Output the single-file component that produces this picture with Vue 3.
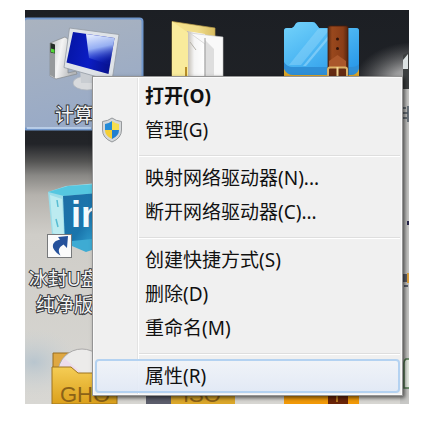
<script setup>
const groups = [
  [
    { label: '打开(O)', bold: true },
    { label: '管理(G)', shield: true },
  ],
  [{ label: '映射网络驱动器(N)...' }, { label: '断开网络驱动器(C)...' }],
  [{ label: '创建快捷方式(S)' }, { label: '删除(D)' }, { label: '重命名(M)' }],
  [{ label: '属性(R)', active: true }],
]
</script>

<template>
  <main class="desktop">
    <svg class="wallpaper" viewBox="25 10 384 394" preserveAspectRatio="xMinYMin slice">
      <defs>
        <linearGradient id="sky" x1="0" y1="0" x2="0" y2="1">
          <stop offset="0" stop-color="#1c1f24" />
          <stop offset="0.34" stop-color="#222428" />
          <stop offset="0.385" stop-color="#555554" />
          <stop offset="0.42" stop-color="#898885" />
          <stop offset="0.47" stop-color="#b5b2ad" />
          <stop offset="0.57" stop-color="#cfcdc8" />
          <stop offset="1" stop-color="#d8d7d3" />
        </linearGradient>
        <radialGradient id="haze" cx="0.5" cy="0.5" r="0.5">
          <stop offset="0" stop-color="#cfcfcf" />
          <stop offset="0.4" stop-color="#b2b2b2" stop-opacity="0.85" />
          <stop offset="1" stop-color="#777" stop-opacity="0" />
        </radialGradient>
        <radialGradient id="mist">
          <stop offset="0" stop-color="#b8c5ce" />
          <stop offset="1" stop-color="#cdd2d3" stop-opacity="0" />
        </radialGradient>
        <linearGradient id="select" x1="0" y1="0" x2="0.3" y2="1">
          <stop offset="0" stop-color="#aab3bf" />
          <stop offset="1" stop-color="#98aac7" />
        </linearGradient>
        <linearGradient id="screen" x1="0" y1="0.4" x2="1" y2="0.6">
          <stop offset="0" stop-color="#0515a5" />
          <stop offset="0.5" stop-color="#0b1dc4" />
          <stop offset="1" stop-color="#071087" />
        </linearGradient>
        <linearGradient id="glare" x1="0" y1="0" x2="0.2" y2="1">
          <stop offset="0" stop-color="#f0f5ff" />
          <stop offset="0.5" stop-color="#a5bffa" stop-opacity="0.9" />
          <stop offset="1" stop-color="#1c39d5" stop-opacity="0.1" />
        </linearGradient>
        <linearGradient id="metal" x1="0" y1="0" x2="1" y2="0.3">
          <stop offset="0" stop-color="#b9bbbd" />
          <stop offset="0.45" stop-color="#f4f4f4" />
          <stop offset="1" stop-color="#b4b6b8" />
        </linearGradient>
        <linearGradient id="manila" x1="0" y1="0" x2="1" y2="0">
          <stop offset="0" stop-color="#f6e38a" />
          <stop offset="0.6" stop-color="#f0dc8a" />
          <stop offset="1" stop-color="#d9bd61" />
        </linearGradient>
        <linearGradient id="paper" x1="0" y1="0" x2="1" y2="0">
          <stop offset="0" stop-color="#bdb7ad" />
          <stop offset="0.4" stop-color="#f5f5f5" />
          <stop offset="1" stop-color="#fff" />
        </linearGradient>
        <linearGradient id="blue" x1="0" y1="0" x2="1" y2="1">
          <stop offset="0" stop-color="#74d3fb" />
          <stop offset="0.5" stop-color="#4db7f3" />
          <stop offset="1" stop-color="#2998e8" />
        </linearGradient>
        <linearGradient id="strap" x1="0" y1="0" x2="1" y2="0">
          <stop offset="0" stop-color="#5e2a10" />
          <stop offset="0.2" stop-color="#99481d" />
          <stop offset="0.75" stop-color="#8a3d17" />
          <stop offset="1" stop-color="#542610" />
        </linearGradient>
        <linearGradient id="gold" x1="0" y1="0" x2="0" y2="1">
          <stop offset="0" stop-color="#f5cd55" />
          <stop offset="1" stop-color="#dba01b" />
        </linearGradient>
        <linearGradient id="cube" x1="0" y1="0" x2="1" y2="1">
          <stop offset="0" stop-color="#1d6fa6" />
          <stop offset="0.6" stop-color="#1a75ac" />
          <stop offset="1" stop-color="#35a8d6" />
        </linearGradient>
      </defs>

      <rect x="25" y="10" width="384" height="394" fill="url(#sky)" />
      <ellipse cx="414" cy="86" rx="62" ry="44" fill="url(#haze)" />
      <rect x="400" y="88" width="9" height="316" fill="#c8c8c6" />
      <ellipse cx="34" cy="362" rx="46" ry="34" fill="url(#mist)" />

      <!-- computer -->
      <rect x="24" y="18.5" width="118.5" height="111" rx="3" fill="url(#select)" stroke="#7197cc" stroke-width="2" />
      <path d="M27 128h64" stroke="#c4d8f1" stroke-width="1.5" />
      <path d="M50 43l15-6 3 2v34l8-2 1 3-21 5-6-3z" fill="url(#metal)" stroke="#85898d" stroke-width="0.7" />
      <path d="M50 43l5 2v33l-5-3z" fill="#96999b" />
      <path d="M50.500 43l4.500 1.500v9l-4.500-1z" fill="#252d26" />
      <path d="M51 48.500l3.500 1v3.500l-3.500-1z" fill="#53d838" />
      <ellipse cx="87" cy="83" rx="14" ry="7" fill="#d8dadd" stroke="#aeb3ba" stroke-width="0.7" />
      <path d="M80 68l14 3v12h-13z" fill="#c9cdd2" />
      <path d="M69.500 28l49.500 6.500-7 46.500-48-13.500z" fill="#dfe3e8" stroke="#939aa3" stroke-width="0.8" />
      <path d="M73 32l41.500 6-6 36-42-11.500z" fill="url(#screen)" />
      <path d="M86 34l28.500 4-4.500 27-21-7z" fill="url(#glare)" />

      <!-- open folder -->
      <path d="M172 21.500l43 6.500v50h-43z" fill="url(#manila)" stroke="#bb9f4b" stroke-width="0.7" />
      <path d="M187 31l18 3v42h-18z" fill="url(#paper)" />
      <path d="M190 33l33 4v39h-18V44z" fill="#f9f9f9" stroke="#c5c5c5" stroke-width="0.6" />
      <path d="M205 40l9 9v27h-9z" fill="#dedede" />
      <path d="M205 38v38" stroke="#9a9a9a" />
      <path d="M190 42l6 8" stroke="#b5b2aa" />
      <path d="M172 21.500l16 11v44h-16z" fill="#f9eb9c" />
      <path d="M186 67v9" stroke="#b88e28" stroke-width="2" />

      <!-- archive folder -->
      <path d="M284 60h75v18h-75z" fill="#dca528" />
      <path d="M284 31q0-3 3-3h5q2-1 3-3 1-3 5-3h12q3 0 4 2l3 4h37q3 0 3 3v38q-2 6-8 6h-58q-6 0-9-6z" fill="#2f8fd6" />
      <path d="M284 31q0-3 3-3h5q2-1 3-3 1-3 5-3h12q3 0 4 2l3 4h37q3 0 3 3v33q-2 3-8 3h-58q-6 0-9-5z" fill="url(#blue)" />
      <path d="M318 29h12l-29 36h-12z" fill="#a5e0fc" opacity="0.35" />
      <path d="M334 29h3l-31 37h-3z" fill="#c2ebff" opacity="0.4" />
      <path d="M328 28q0-2 2-2h16q2 0 2 2v48h-20z" fill="url(#strap)" stroke="#471d0c" stroke-width="0.8" />
      <circle cx="337.500" cy="39" r="1.500" fill="#30130a" />
      <circle cx="337.500" cy="48.500" r="1.500" fill="#30130a" />
      <path d="M329 61l8.500-6 8.500 6v16h-17z" fill="#aa572b" />
      <rect x="328" y="67.500" width="19" height="12" rx="2" fill="#652a12" stroke="#dcb267" stroke-width="2" />
      <path d="M337.500 67v10" stroke="#f0d291" stroke-width="2" />

      <!-- shortcut cube -->
      <path d="M48 192l18-6 32-3v58l-32 2-14-9z" fill="#9cdde9" />
      <path d="M48 192l20-6 30-2v9l-34 3z" fill="#55c7e0" />
      <path d="M63 196l35-3v49l-33 2z" fill="url(#cube)" />
      <path d="M50 195l12 4 2 38-11-4z" fill="#bcebf0" />
      <path d="M57 200l1 7M56 219l2 8" stroke="#58bdd3" stroke-width="1.500" />
      <text class="logo" x="71" y="227">in</text>
      <rect x="47.500" y="234.500" width="24" height="23" fill="#fbfbfb" stroke="#77797b" />
      <path d="M58 237l10-1-1 12-3.500-3.500c-5 3-6 6-3 11-11-7-9-14-0.500-16z" fill="#25519b" />
      <path d="M72 241l20-2v11l-6 2-14-6z" fill="#3eabd3" />

      <!-- disk image archives -->
      <path d="M53 353h20v40h-20z" fill="#dfa842" stroke="#976c21" />
      <circle cx="82" cy="373" r="24" fill="#ecebea" stroke="#aaa9a9" />
      <path d="M82 373L59 367l5-9z" fill="#eddceb" />
      <path d="M52 367h19l7 6h39v31H52z" fill="url(#gold)" stroke="#9d7420" />
      <text class="gho" x="60" y="402">GHO</text>
      <rect x="146" y="390" width="25" height="14" fill="#5c5e6c" />
      <rect x="171" y="390" width="64" height="14" fill="#dca82b" />
      <text class="gho" x="183" y="402">ISO</text>
      <rect x="284" y="390" width="75" height="14" fill="#f29a08" />
      <rect x="328" y="390" width="20" height="14" fill="#6b2509" />
      <path d="M337 390v12" stroke="#b87820" stroke-width="2" />

      <!-- icons past the right side of the menu -->
      <path d="M403 55l6-3v37h-6z" fill="#3c3f40" />
      <path d="M403 60l5-6v15h-5z" fill="#dce2e3" />
      <path d="M403 108h3m-3 5h5m-5 5h4m1-12v16" stroke="#4e5a66" stroke-width="1.500" />
      <path d="M407 221h2v4h-2z" fill="#28264c" />
      <path d="M404 274v8m2-8v8M404 286h4" stroke="#3d4050" stroke-width="1.500" />
      <path d="M408 273v10" stroke="#e1a440" stroke-width="2" />
      <path d="M409 359h-3q-2 1-2 4v25h5" fill="#e5ebe1" stroke="#517b50" stroke-width="1.500" />

      <g class="caption">
        <text x="55" y="122">计算机</text>
        <text x="29" y="286">冰封U盘</text>
        <text x="36" y="312">纯净版</text>
      </g>
    </svg>

    <div class="menu" role="menu">
      <div v-for="(group, i) in groups" :key="i" class="group" role="group">
        <button
          v-for="item in group"
          :key="item.label"
          type="button"
          role="menuitem"
          class="item"
          :class="{ bold: item.bold, active: item.active }"
        >
          <span class="icon">
            <svg v-if="item.shield" width="22" height="26" viewBox="0 0 22 26" aria-hidden="true">
              <path d="M11 1q4 3 9.500 3.500V13q0 8-9.500 12Q1.500 21 1.500 13V4.500Q7 4 11 1z" fill="#d5d8da" stroke="#96999c" />
              <path d="M11 4v9H4V7q4-.5 7-3z" fill="#258bd7" />
              <path d="M11 4q3 2.500 7 3v6h-7z" fill="#f7df4f" />
              <path d="M4 13h7v9q-7-3-7-9z" fill="#f5cf35" />
              <path d="M11 13h7q0 6-7 9z" fill="#217fd0" />
            </svg>
          </span>
          <span>{{ item.label }}</span>
        </button>
      </div>
    </div>
  </main>
</template>

<style>
body {
  background: #fff;
}
</style>

<style scoped>
.desktop {
  position: relative;
  overflow: hidden;
  margin: 10px 33px 18px 25px;
  padding: 66px 6px 8px 67px;
  font-family: "Noto Sans", "Noto Sans CJK SC", sans-serif;
}

.wallpaper {
  position: absolute;
  inset: 0;
  width: 100%;
  height: 100%;
}

.caption text {
  font-size: 19px;
  fill: #f4f4f4;
  stroke: #33363b;
  stroke-width: 2px;
  paint-order: stroke;
}

.logo {
  font-family: "Liberation Sans", sans-serif;
  font-size: 36px;
  font-weight: bold;
  fill: #f3fafd;
}

.gho {
  font-family: "Liberation Sans", sans-serif;
  font-size: 22px;
  fill: #8b6218;
}

.menu {
  position: relative;
  padding: 2px;
  border: 1px solid #949494;
  background: linear-gradient(90deg, #f0f0f0 44px, #e3e3e3 44px, #e3e3e3 45px, #fff 45px, #fff 46px, #f0f0f0 46px);
  box-shadow: inset 0 0 0 1px #fafafa, 2px 2px 4px rgba(0, 0, 0, 0.6);
}

.group + .group::before {
  content: "";
  display: block;
  height: 1px;
  margin: 8px 0 4px 44px;
  border-top: 1px solid #dedede;
  background: #fff;
}

.item {
  display: flex;
  align-items: center;
  box-sizing: border-box;
  width: 100%;
  height: 34px;
  padding: 0;
  border: 2px solid transparent;
  border-radius: 4px;
  background: none;
  color: #111;
  font: inherit;
  font-size: 19px;
  line-height: 28px;
  text-align: left;
  white-space: nowrap;
}

.icon {
  display: flex;
  flex: none;
  width: 48px;
  padding-left: 4px;
  box-sizing: border-box;
}

.item.bold {
  font-weight: bold;
}

.item.active {
  border-color: #b4d2f1;
  background: linear-gradient(rgba(240, 243, 248, 0.9), rgba(225, 233, 246, 0.9));
}
</style>
